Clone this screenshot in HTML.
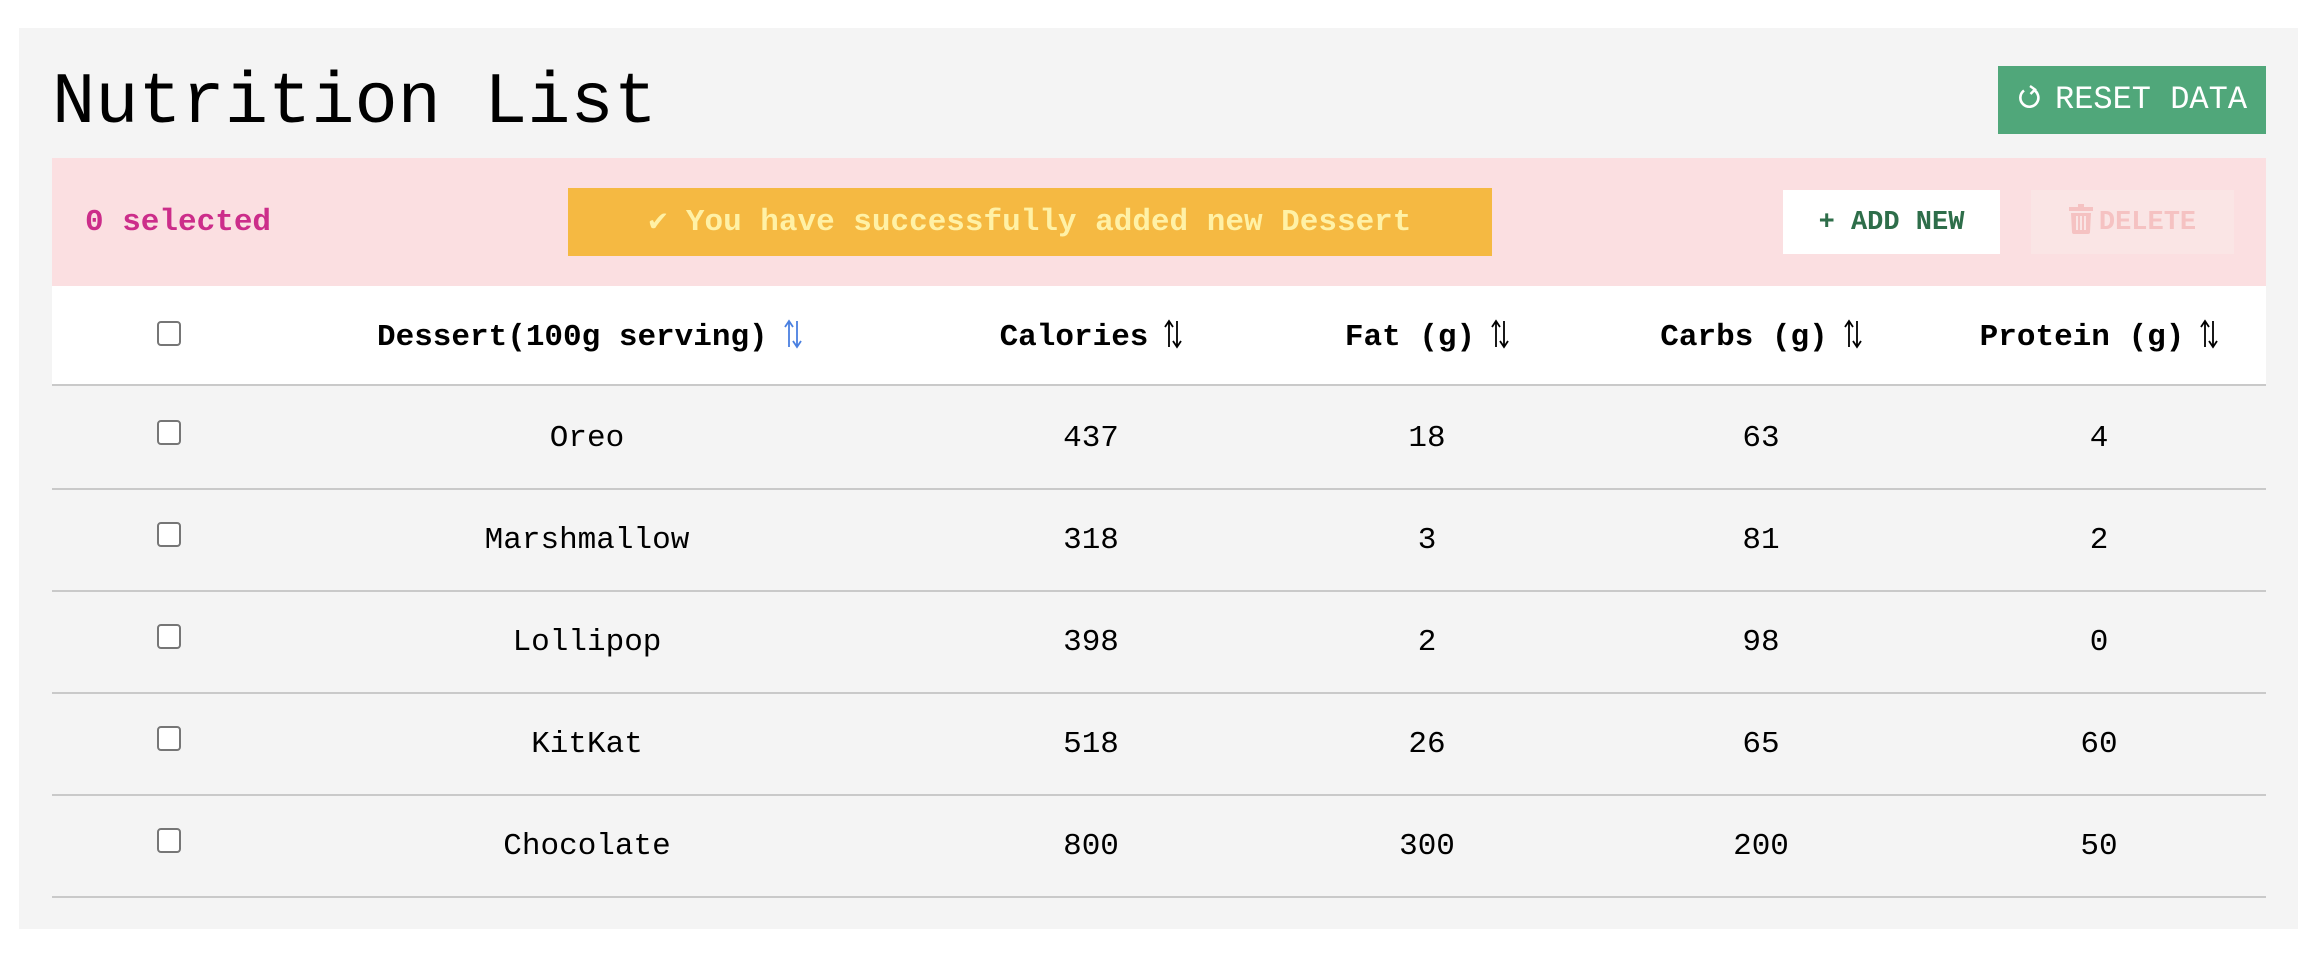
<!DOCTYPE html>
<html><head><meta charset="utf-8"><style>
*{margin:0;padding:0;box-sizing:border-box}
body{width:2320px;height:960px;background:#fff;font-family:"Liberation Mono","Courier New",monospace;color:#000;position:relative;overflow:hidden}
.abs{position:absolute}
.wrap{left:19px;top:28px;width:2279px;height:901px;background:#f4f4f4}
h1{position:absolute;left:52px;top:58px;font-size:72px;font-weight:normal;line-height:90px;white-space:nowrap}
.reset{left:1998px;top:66px;width:268px;height:68px;background:#50a77a;color:#fff;font-size:32px;line-height:68px;text-align:center;white-space:nowrap}
.pink{left:52px;top:158px;width:2214px;height:128px;background:#fbdfe1}
.sel{left:85px;top:201px;font-size:31px;font-weight:bold;color:#cc2d8a;line-height:44px}
.banner{left:568px;top:188px;width:924px;height:68px;background:#f5b942;color:#fff1a6;font-size:31px;font-weight:bold;line-height:70px;text-align:center;white-space:nowrap}
.add{left:1783px;top:190px;width:217px;height:64px;background:#fff;color:#2e6e4a;font-size:27px;font-weight:bold;line-height:66px;text-align:center;white-space:nowrap}
.del{left:2031px;top:190px;width:203px;height:64px;background:#fae5e5;color:#f5c2c2;font-size:27px;font-weight:bold;line-height:66px;text-align:center;white-space:nowrap}
.head{left:52px;top:286px;width:2214px;height:100px;background:#fff;border-bottom:2px solid #c9c9c9}
.row{left:52px;width:2214px;height:102px;border-bottom:2px solid #c9c9c9}
.c{position:absolute;width:420px;margin-left:-210px;text-align:center;font-size:31px;line-height:40px;top:31px;white-space:nowrap}
.head .c{font-weight:bold;top:32px}
.cb{position:absolute;left:105px;top:32px;width:24px;height:25px;border:2px solid #767676;border-radius:4px;background:#fff}
.head .cb{top:35px}
svg.s{display:inline-block;vertical-align:-4px;margin-left:16px}
</style></head><body>
<div class="abs wrap"></div>
<h1>Nutrition List</h1>
<div class="abs reset"><svg width="26" height="26" viewBox="0 0 26 26" style="vertical-align:-3px;margin-right:12px"><path d="M16 4.5 A9 9 0 1 1 7 5.5" fill="none" stroke="#fff" stroke-width="2.6"/><path d="M13 1 L18 4.5 L13.5 9" fill="none" stroke="#fff" stroke-width="2.4"/></svg>RESET DATA</div>
<div class="abs pink"></div>
<div class="abs sel">0 selected</div>
<div class="abs banner">✔ You have successfully added new Dessert</div>
<div class="abs add">+ ADD NEW</div>
<div class="abs del"><svg width="24" height="30" viewBox="0 0 24 30" style="vertical-align:-5px;margin-right:6px"><rect x="9" y="0" width="6" height="4" fill="#f5c2c2"/><rect x="0" y="3" width="24" height="4" fill="#f5c2c2"/><path d="M2 9 H22 L21 28 Q21 30 19 30 H5 Q3 30 3 28 Z" fill="#f5c2c2"/><path d="M8 12V26M12 12V26M16 12V26" stroke="#fae5e5" stroke-width="2"/></svg>DELETE</div>

<div class="abs head">
<div class="cb"></div>
<div class="c" style="left:535px">Dessert(100g serving)<svg class="s" width="18" height="30" viewBox="0 0 18 30"><path d="M5 28V3M1 8L5 2L9 8M13 2V27M9 22L13 28L17 22" fill="none" stroke="#4a80e0" stroke-width="1.8"/></svg></div>
<div class="c" style="left:1039px">Calories<svg class="s" width="18" height="30" viewBox="0 0 18 30"><path d="M5 28V3M1 8L5 2L9 8M13 2V27M9 22L13 28L17 22" fill="none" stroke="#000" stroke-width="1.8"/></svg></div>
<div class="c" style="left:1375px">Fat (g)<svg class="s" width="18" height="30" viewBox="0 0 18 30"><path d="M5 28V3M1 8L5 2L9 8M13 2V27M9 22L13 28L17 22" fill="none" stroke="#000" stroke-width="1.8"/></svg></div>
<div class="c" style="left:1709px">Carbs (g)<svg class="s" width="18" height="30" viewBox="0 0 18 30"><path d="M5 28V3M1 8L5 2L9 8M13 2V27M9 22L13 28L17 22" fill="none" stroke="#000" stroke-width="1.8"/></svg></div>
<div class="c" style="left:2047px">Protein (g)<svg class="s" width="18" height="30" viewBox="0 0 18 30"><path d="M5 28V3M1 8L5 2L9 8M13 2V27M9 22L13 28L17 22" fill="none" stroke="#000" stroke-width="1.8"/></svg></div>
</div>

<div class="abs row" style="top:388px"><div class="cb"></div><div class="c" style="left:535px">Oreo</div><div class="c" style="left:1039px">437</div><div class="c" style="left:1375px">18</div><div class="c" style="left:1709px">63</div><div class="c" style="left:2047px">4</div></div>
<div class="abs row" style="top:490px"><div class="cb"></div><div class="c" style="left:535px">Marshmallow</div><div class="c" style="left:1039px">318</div><div class="c" style="left:1375px">3</div><div class="c" style="left:1709px">81</div><div class="c" style="left:2047px">2</div></div>
<div class="abs row" style="top:592px"><div class="cb"></div><div class="c" style="left:535px">Lollipop</div><div class="c" style="left:1039px">398</div><div class="c" style="left:1375px">2</div><div class="c" style="left:1709px">98</div><div class="c" style="left:2047px">0</div></div>
<div class="abs row" style="top:694px"><div class="cb"></div><div class="c" style="left:535px">KitKat</div><div class="c" style="left:1039px">518</div><div class="c" style="left:1375px">26</div><div class="c" style="left:1709px">65</div><div class="c" style="left:2047px">60</div></div>
<div class="abs row" style="top:796px"><div class="cb"></div><div class="c" style="left:535px">Chocolate</div><div class="c" style="left:1039px">800</div><div class="c" style="left:1375px">300</div><div class="c" style="left:1709px">200</div><div class="c" style="left:2047px">50</div></div>
</body></html>
